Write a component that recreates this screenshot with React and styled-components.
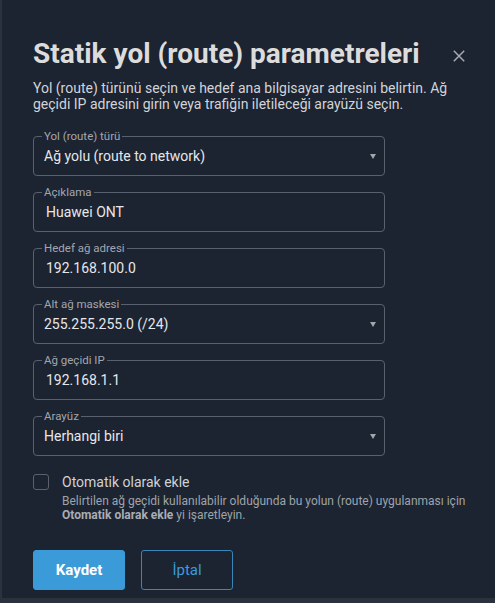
import React from "react";
import styled, { createGlobalStyle } from "styled-components";

const Global = createGlobalStyle`
  html, body { margin: 0; padding: 0; background: #2b323d; }
  body { font-family: Roboto, "Noto Sans", "Liberation Sans", sans-serif; }
  * { box-sizing: border-box; }
`;

const Dialog = styled.div`
  margin-left: 2px;
  width: 493px;
  height: 598px;
  background: #1c2331;
  padding: 37px 0 0 31px;
`;

const Header = styled.div`
  display: flex;
  align-items: center;
  justify-content: space-between;
  width: 432px;
`;

const Title = styled.h1`
  margin: 0;
  font-size: 28px;
  line-height: 34px;
  font-weight: 700;
  color: #dcdcdc;
`;

const Close = styled.button`
  background: none;
  border: none;
  padding: 0;
  width: 12px;
  height: 12px;
  display: flex;
  align-items: center;
  justify-content: center;
  cursor: pointer;
  margin-top: 4px;
`;

const Desc = styled.p`
  margin: 9px 0 0 0;
  width: 430px;
  font-size: 14px;
  line-height: 16px;
  color: #d2d4d8;
`;

const Form = styled.div`
  margin-top: 18px;
  width: 352px;
  display: flex;
  flex-direction: column;
  gap: 10px;
`;

const Field = styled.fieldset`
  margin: 0;
  padding: 3px 8px 9px 10px;
  border: 1px solid #5a616e;
  border-radius: 4px;
  min-width: 0;
`;

const Legend = styled.legend`
  margin-left: -2px;
  padding: 0 2px;
  font-size: 11.5px;
  line-height: 13px;
  color: #a2a7ae;
`;

const ValueRow = styled.div`
  display: flex;
  align-items: center;
  justify-content: space-between;
  height: 20px;
  padding-left: ${(p) => (p.$select ? "0" : "2px")};
`;

const Value = styled.span`
  font-size: 14px;
  line-height: 20px;
  color: #e6e7ea;
`;

const Caret = styled.span`
  width: 0;
  height: 0;
  border-left: 3.5px solid transparent;
  border-right: 3.5px solid transparent;
  border-top: 5px solid #a2a7ae;
`;

const CheckRow = styled.div`
  margin-top: 17px;
  display: flex;
  gap: 13px;
`;

const Box = styled.span`
  flex: none;
  width: 16px;
  height: 16px;
  border: 1px solid #5a616e;
  border-radius: 3px;
  margin-top: 1px;
`;

const CheckText = styled.div`
  display: flex;
  flex-direction: column;
`;

const CheckLabel = styled.span`
  font-size: 14px;
  line-height: 18px;
  color: #cfd1d5;
`;

const Help = styled.span`
  margin-top: 3px;
  font-size: 12px;
  line-height: 14px;
  color: #9ea3aa;
  b { font-weight: 700; color: #a9adb3; }
`;

const Actions = styled.div`
  margin-top: 28px;
  display: flex;
  gap: 16px;
`;

const Button = styled.button`
  width: 92px;
  height: 40px;
  border-radius: 3px;
  font-family: inherit;
  font-size: 15px;
  cursor: pointer;
  border: 1px solid ${(p) => (p.$primary ? "#3b9bd9" : "#3b86b9")};
  background: ${(p) => (p.$primary ? "#3b9bd9" : "transparent")};
  color: ${(p) => (p.$primary ? "#ffffff" : "#3b9bd9")};
  font-weight: ${(p) => (p.$primary ? 700 : 400)};
`;

function TextField({ label, value, select }) {
  return (
    <Field>
      <Legend>{label}</Legend>
      <ValueRow $select={select}>
        <Value>{value}</Value>
        {select && <Caret />}
      </ValueRow>
    </Field>
  );
}

export default function App() {
  return (
    <>
      <Global />
      <Dialog>
        <Header>
          <Title>Statik yol (route) parametreleri</Title>
          <Close aria-label="Kapat">
            <svg width="12" height="12" viewBox="0 0 12 12">
              <path d="M0.8 0.8L11.2 11.2M11.2 0.8L0.8 11.2" stroke="#a7abb2" strokeWidth="1.5" />
            </svg>
          </Close>
        </Header>
        <Desc>
          Yol (route) türünü seçin ve hedef ana bilgisayar adresini belirtin. Ağ
          geçidi IP adresini girin veya trafiğin iletileceği arayüzü seçin.
        </Desc>
        <Form>
          <TextField label="Yol (route) türü" value="Ağ yolu (route to network)" select />
          <TextField label="Açıklama" value="Huawei ONT" />
          <TextField label="Hedef ağ adresi" value="192.168.100.0" />
          <TextField label="Alt ağ maskesi" value="255.255.255.0 (/24)" select />
          <TextField label="Ağ geçidi IP" value="192.168.1.1" />
          <TextField label="Arayüz" value="Herhangi biri" select />
        </Form>
        <CheckRow>
          <Box />
          <CheckText>
            <CheckLabel>Otomatik olarak ekle</CheckLabel>
            <Help>
              Belirtilen ağ geçidi kullanılabilir olduğunda bu yolun (route) uygulanması için
              <br />
              <b>Otomatik olarak ekle</b> yi işaretleyin.
            </Help>
          </CheckText>
        </CheckRow>
        <Actions>
          <Button $primary>Kaydet</Button>
          <Button>İptal</Button>
        </Actions>
      </Dialog>
    </>
  );
}
